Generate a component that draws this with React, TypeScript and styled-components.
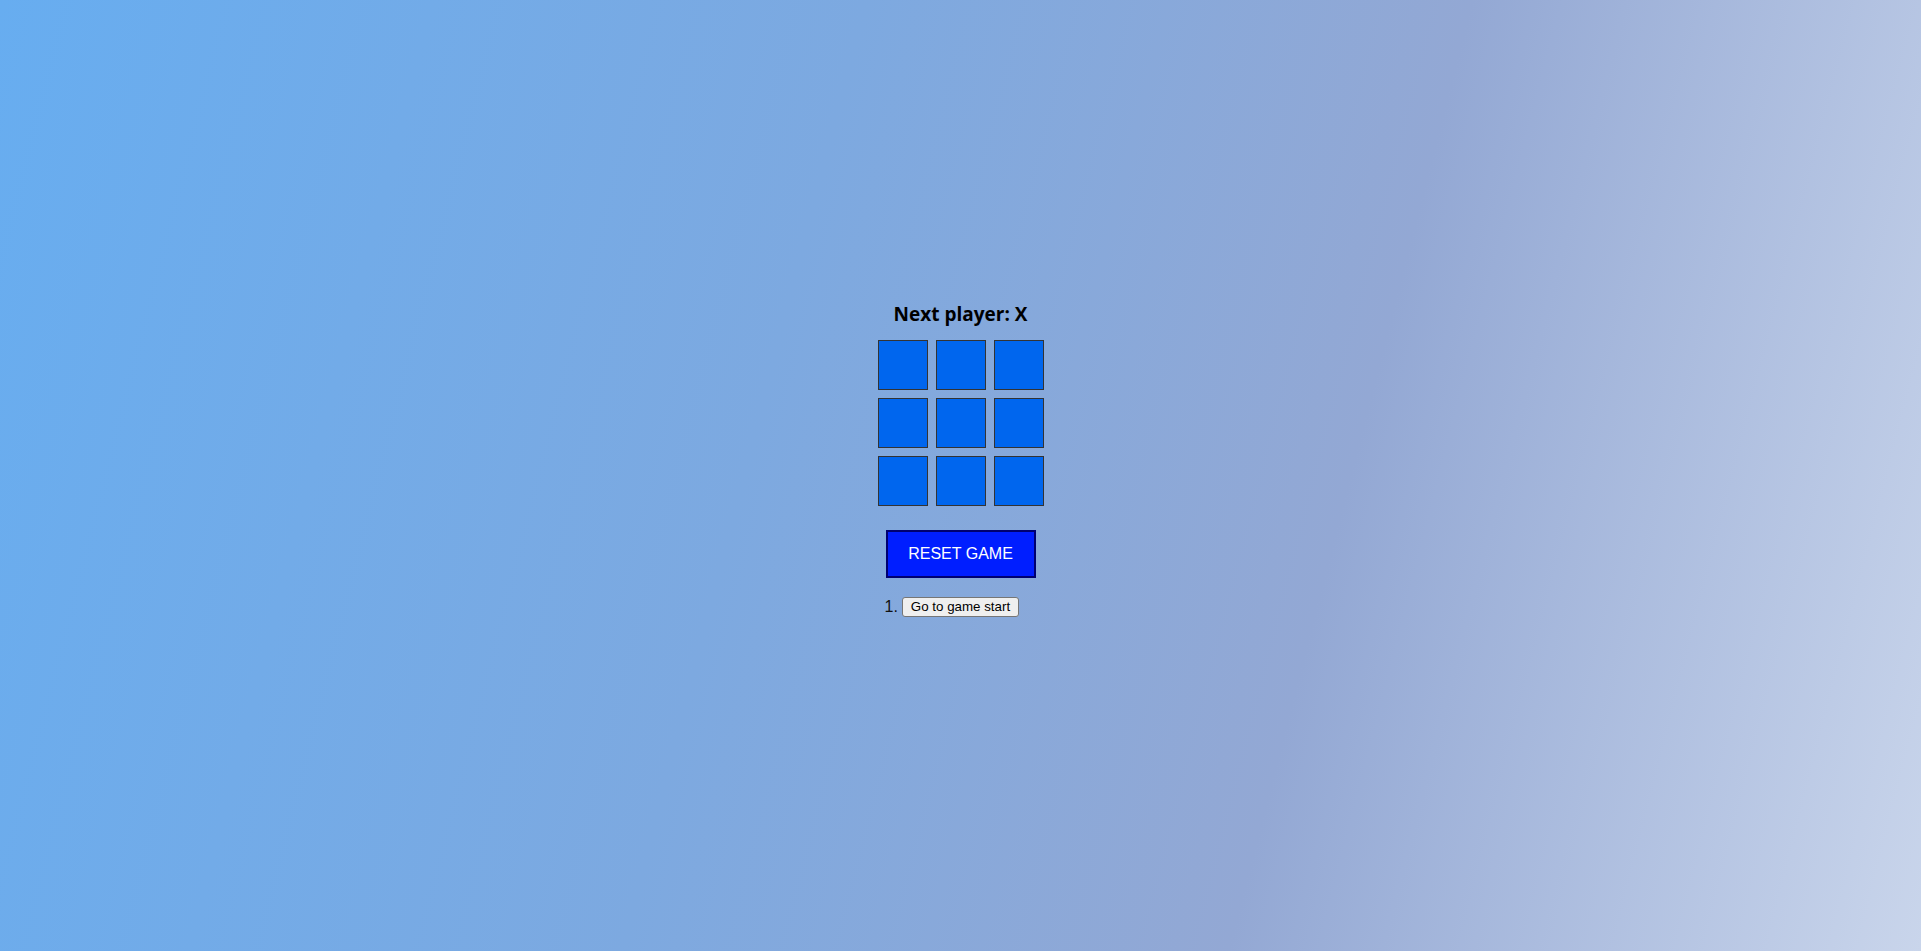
import React, { useState } from "react";
import styled, { createGlobalStyle } from "styled-components";

const GlobalStyle = createGlobalStyle`
  html, body {
    margin: 0;
    padding: 0;
    height: 100%;
  }
  body {
    font-family: "Liberation Sans", Arial, sans-serif;
    color: #111;
  }
  #root {
    min-height: 100%;
  }
`;

const Page = styled.div`
  box-sizing: border-box;
  min-height: 100vh;
  padding-top: 302px;
  display: flex;
  flex-direction: column;
  align-items: center;
  background: linear-gradient(104.4deg, #67adf0 0%, #7da9e0 40%, #93a8d4 68%, #c9d5eb 100%);
`;

const Status = styled.h2`
  margin: 0;
  font-family: "Open Sans", "Noto Sans", sans-serif;
  font-weight: 700;
  font-size: 19px;
  line-height: 24px;
  color: #000;
`;

const Board = styled.div`
  margin-top: 14px;
  display: grid;
  grid-template-columns: repeat(3, 50px);
  grid-auto-rows: 50px;
  gap: 8px;
`;

const Square = styled.button`
  box-sizing: border-box;
  width: 50px;
  height: 50px;
  margin: 0;
  padding: 0;
  border: 1px solid #333;
  background: #0066ee;
  color: #fff;
  font-family: "Liberation Sans", Arial, sans-serif;
  font-size: 28px;
  font-weight: 700;
  cursor: pointer;
`;

const ResetButton = styled.button`
  box-sizing: border-box;
  margin-top: 24px;
  width: 150px;
  height: 48px;
  border: 2px solid #000070;
  background: #001eff;
  color: #fff;
  font-family: "Liberation Sans", Arial, sans-serif;
  font-size: 16px;
  cursor: pointer;
`;

const MoveList = styled.ol`
  margin: 19px 0 0;
  padding: 0;
  list-style: decimal outside;
  font-family: "Liberation Sans", Arial, sans-serif;
  font-size: 16px;
  line-height: 20px;
  color: #111;
`;

const MoveItem = styled.li`
  height: 20px;
`;

const MoveButton = styled.button`
  box-sizing: border-box;
  height: 20px;
  margin: 0;
  padding: 0 7.5px;
  border: 1px solid #767676;
  border-radius: 3px;
  background: #efefef;
  color: #000;
  font-family: "Liberation Sans", Arial, sans-serif;
  font-size: 13.333px;
  line-height: 18px;
  vertical-align: top;
  cursor: pointer;
`;

export default function App() {
  const [squares, setSquares] = useState<(string | null)[]>(Array(9).fill(null));
  const [xNext, setXNext] = useState(true);

  const play = (i: number) => {
    if (squares[i]) return;
    const next = squares.slice();
    next[i] = xNext ? "X" : "O";
    setSquares(next);
    setXNext(!xNext);
  };

  const reset = () => {
    setSquares(Array(9).fill(null));
    setXNext(true);
  };

  return (
    <>
      <GlobalStyle />
      <Page>
        <Status>Next player: {xNext ? "X" : "O"}</Status>
        <Board>
          {squares.map((v, i) => (
            <Square key={i} onClick={() => play(i)}>
              {v}
            </Square>
          ))}
        </Board>
        <ResetButton onClick={reset}>RESET GAME</ResetButton>
        <MoveList>
          <MoveItem>
            <MoveButton onClick={reset}>Go to game start</MoveButton>
          </MoveItem>
        </MoveList>
      </Page>
    </>
  );
}
